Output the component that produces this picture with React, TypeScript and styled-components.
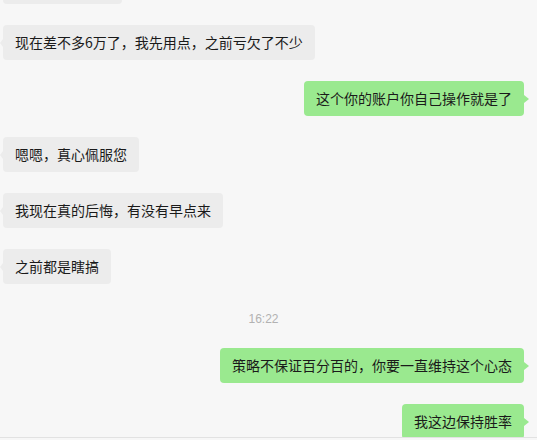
import styled, { createGlobalStyle } from 'styled-components';

const GlobalStyle = createGlobalStyle`
  html, body {
    margin: 0;
    padding: 0;
    background: #f7f7f7;
  }
  * {
    box-sizing: border-box;
  }
`;

const green = '#9ae98f';
const grey = '#ececec';

const Window = styled.div`
  width: 537px;
  height: 440px;
  display: flex;
  flex-direction: column;
  background: #f7f7f7;
  font-family: "Noto Sans CJK SC", "Microsoft YaHei", sans-serif;
  overflow: hidden;
`;

const ChatArea = styled.div`
  height: 437px;
  overflow: hidden;
`;

const MessageList = styled.div`
  display: flex;
  flex-direction: column;
  gap: 21px;
  padding: 0 13px 0 3px;
  margin-top: -31px;
`;

const Row = styled.div<{ mine?: boolean }>`
  display: flex;
  justify-content: ${p => (p.mine ? 'flex-end' : 'flex-start')};
`;

const Bubble = styled.div<{ mine?: boolean }>`
  position: relative;
  padding: 8px 12px;
  font-size: 14px;
  line-height: 19px;
  color: #1a1a1a;
  border-radius: 4px;
  white-space: nowrap;
  background: ${p => (p.mine ? green : grey)};

  &::before {
    content: '';
    position: absolute;
    top: 50%;
    margin-top: -4px;
    border-top: 4px solid transparent;
    border-bottom: 4px solid transparent;
    ${p =>
      p.mine
        ? `right: -5px; border-left: 5px solid ${green};`
        : `left: -3px; border-right: 3px solid ${grey};`}
  }
`;

// the message scrolled off the top: only its lower edge shows
const TopBubble = styled(Bubble)`
  width: 119px;
  height: 35px;
`;

const TimeRow = styled.div`
  display: flex;
  justify-content: center;
  font-size: 12px;
  line-height: 16px;
  color: #b2b2b2;
  margin: 6px 0 0;
  font-family: "Liberation Sans", Arial, sans-serif;
`;

const Footer = styled.div`
  flex: 1;
  border-top: 1px solid #e2e2e2;
  background: #f7f7f7;
`;

type Msg = { mine?: boolean; text?: string; time?: string };

const messages: Msg[] = [
  { text: '现在差不多6万了，我先用点，之前亏欠了不少' },
  { mine: true, text: '这个你的账户你自己操作就是了' },
  { text: '嗯嗯，真心佩服您' },
  { text: '我现在真的后悔，有没有早点来' },
  { text: '之前都是瞎搞' },
  { time: '16:22' },
  { mine: true, text: '策略不保证百分百的，你要一直维持这个心态' },
  { mine: true, text: '我这边保持胜率' },
];

export default function App() {
  return (
    <>
      <GlobalStyle />
      <Window>
        <ChatArea>
          <MessageList>
            <Row>
              <TopBubble />
            </Row>
            {messages.map((m, i) =>
              m.time ? (
                <TimeRow key={i}>{m.time}</TimeRow>
              ) : (
                <Row key={i} mine={m.mine}>
                  <Bubble mine={m.mine}>{m.text}</Bubble>
                </Row>
              )
            )}
          </MessageList>
        </ChatArea>
        <Footer />
      </Window>
    </>
  );
}
